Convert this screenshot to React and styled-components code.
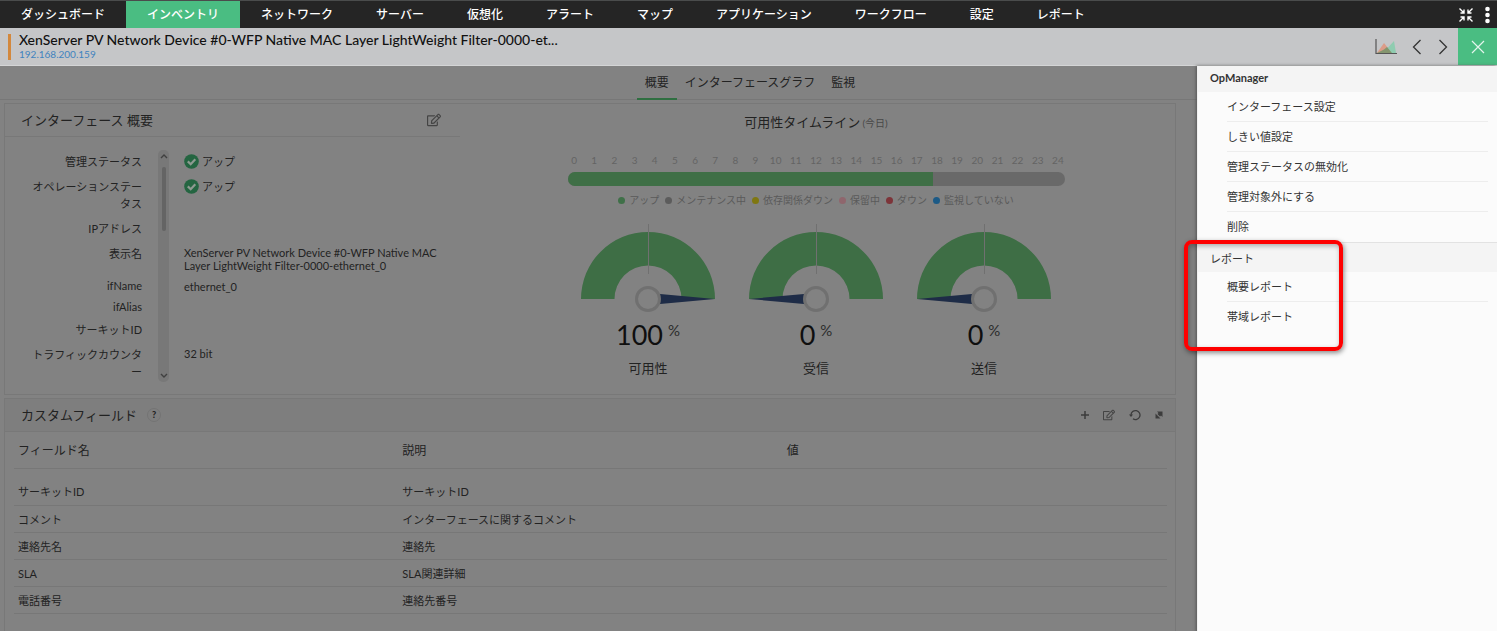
import React from "react";
import styled, { createGlobalStyle } from "styled-components";
import { FaRegEdit } from "react-icons/fa";

const Global = createGlobalStyle`
  *, *::before, *::after { box-sizing: border-box; }
  body {
    margin: 0;
    background: #828282;
    color: #222;
    font-family: Lato, "Noto Sans CJK JP", sans-serif;
    font-size: 11px;
    line-height: 17px;
  }
  h1, h2, h3, p, ul, dl, dd, dt, ol { margin: 0; padding: 0; font-weight: 400; }
  ul, ol { list-style: none; }
  a { color: inherit; text-decoration: none; }
  button {
    border: 0; padding: 0; background: none; color: inherit; font: inherit;
    display: flex; align-items: center; justify-content: center; cursor: pointer;
  }
`;

const Page = styled.div`
  min-height: 100vh;
  display: flex;
  flex-direction: column;
`;

const TopNav = styled.nav`
  display: flex;
  height: 28px;
  background: #252525;
  border-top: 1px solid #4a4c4c;
  color: #fff;
`;

const NavLink = styled.a`
  padding: 0 21px;
  font-size: 12px;
  font-weight: 500;
  line-height: 27px;
  white-space: nowrap;
  background: ${(p) => (p.$active ? "#4abd82" : "transparent")};

  &:nth-child(n + 4) { margin-left: 1px; }
`;

const NavTools = styled.div`
  display: flex;
  align-items: center;
  gap: 10px;
  margin-left: auto;
  padding-right: 6px;
`;

const DeviceBar = styled.header`
  display: flex;
  height: 38px;
  padding-left: 8px;
  background: #c5c6c8;
  border-bottom: 1px solid #d4d5d6;
`;

const DeviceMark = styled.span`
  width: 3px;
  height: 26px;
  margin: 6px 8px 0 0;
  background: #d3883d;
`;

const DeviceTitle = styled.h1`
  padding-top: 3px;
  font-size: 14px;
  font-weight: 500;
  line-height: 17px;
  color: #111;
`;

const DeviceAddress = styled.a`
  display: block;
  font-size: 10px;
  line-height: 13px;
  color: #3f83bf;
`;

const DeviceTools = styled.div`
  display: flex;
  margin-left: auto;
  gap: 9px;
  align-items: center;
`;

const DeviceActions = styled.div`
  display: flex;
  gap: 14px;
`;

const CloseButton = styled.button`
  width: 39px;
  height: 37px;
  background: #4abd82;
`;

const Body = styled.div`
  flex: 1;
  display: flex;
`;

const Main = styled.main`
  flex: 1;
  min-width: 0;
`;

const Tabs = styled.nav`
  display: flex;
  justify-content: center;
  height: 34px;
  padding-left: 303px;
  border-bottom: 1px solid #777;
`;

const Tab = styled.a`
  padding: 0 8px;
  height: 34px;
  font-size: 12px;
  line-height: 34px;
  white-space: nowrap;
  border-bottom: ${(p) => (p.$active ? "2px solid #2f6f41" : "0")};
`;

const Panel = styled.section`
  margin: 3px 21px 0 4px;
  border: 1px solid #787878;
`;

const SummaryPanel = styled(Panel)`
  display: flex;
  height: 292px;
`;

const InfoColumn = styled.div`
  width: 455px;
`;

const PanelHead = styled.div`
  display: flex;
  align-items: center;
  height: 33px;
  padding: 0 ${(p) => p.$right || 19}px 0 16px;
  border-bottom: 1px solid #787878;
  background: ${(p) => (p.$shade ? "#7e7e7e" : "transparent")};
`;

const PanelTitle = styled.h2`
  font-size: 13px;
  line-height: 20px;
`;

const HeadTools = styled.div`
  display: flex;
  gap: 14px;
  align-items: center;
  margin-left: auto;
  color: #444;
`;

const InfoList = styled.div`
  position: relative;
  height: 233px;
  margin-top: 12px;
  overflow: hidden;
`;

const InfoRow = styled.dl`
  display: flex;
  line-height: ${(p) => (p.$latin ? 13 : 17)}px;
`;

const InfoLabel = styled.dt`
  width: 137px;
  padding: 4px 0 4px 26px;
  text-align: right;
  word-break: break-all;
`;

const InfoValue = styled.dd`
  display: flex;
  align-items: flex-start;
  gap: 3px;
  width: 300px;
  padding: 5px 0 3px 42px;
  line-height: 13px;
`;

const StateText = styled.span`
  line-height: 15px;
`;

const ScrollTrack = styled.div`
  position: absolute;
  left: 153px;
  top: 1px;
  width: 11px;
  height: 232px;
  border-radius: 5px;
  background: #787878;
  display: flex;
  flex-direction: column;
  align-items: center;
  padding: 4px 0;
`;

const ScrollThumb = styled.div`
  width: 4px;
  height: 64px;
  margin: 8px 0 auto;
  border-radius: 2px;
  background: #646464;
`;

const StatsColumn = styled.div`
  flex: 1;
  display: flex;
  flex-direction: column;
  align-items: center;
  padding-right: 3px;
`;

const StatsTitle = styled.h2`
  margin-top: 8px;
  font-size: 13px;
  line-height: 20px;

  small { font-size: 10px; color: #484848; margin-left: 2px; }
`;

const Hours = styled.ol`
  display: grid;
  grid-template-columns: repeat(25, 1fr);
  width: 504px;
  margin-top: 19px;
  font-size: 10px;
  line-height: 16px;
  text-align: center;
  color: #646464;
`;

const TimeBar = styled.div`
  width: 497px;
  height: 14px;
  margin-top: 4px;
  border-radius: 7px;
  background: #696969;
  overflow: hidden;
`;

const TimeFill = styled.div`
  height: 100%;
  background: #3f6f46;
`;

const Legend = styled.ul`
  display: flex;
  gap: 6px;
  margin-top: 6px;
  font-size: 10px;
  line-height: 16px;
  color: #5a5a5a;
`;

const LegendItem = styled.li`
  display: flex;
  align-items: center;
  gap: 4px;

  &::before {
    content: "";
    width: 7px;
    height: 7px;
    border-radius: 50%;
    background: ${(p) => p.$color};
  }
`;

const Gauges = styled.div`
  display: flex;
  margin-top: 14px;
`;

const GaugeBox = styled.div`
  display: flex;
  flex-direction: column;
  align-items: center;
  width: 168px;

  svg { display: block; }
`;

const GaugeValue = styled.p`
  display: flex;
  gap: 5px;
  margin-top: 7px;
  font-size: 27px;
  line-height: 32px;
  color: #0f0f0f;

  sup { font-size: 15px; line-height: 22px; color: #2c2c2c; }
`;

const GaugeLabel = styled.p`
  margin-top: 8px;
  font-size: 13px;
  line-height: 18px;
`;

const HelpButton = styled.button`
  width: 14px;
  height: 14px;
  margin-left: 10px;
  border: 1px solid #747474;
  border-radius: 50%;
  font-size: 9px;
  font-weight: 900;
  line-height: 12px;
`;

const FieldTable = styled.table`
  width: calc(100% - 17px);
  margin: 0 8px 17px 9px;
  table-layout: fixed;
  border-collapse: separate;
  border-spacing: 0;

  th, td {
    height: 27px;
    padding: 0 4px;
    text-align: left;
    font-weight: 400;
    border-bottom: 1px solid #777;
    line-height: 17px;
  }
  th { height: 37px; font-size: 12px; }
  tbody tr:first-child td { height: 37px; padding-top: 9px; }
`;

const Side = styled.aside`
  width: 300px;
  background: #fbfbfb;
  border-left: 1px solid #f0f0f0;
  box-shadow: -1px 0 3px #555;
  color: #333;
`;

const SideGroup = styled.section`
  position: relative;
`;

const SideHead = styled.h3`
  height: ${(p) => (p.$divided ? 30 : 26)}px;
  padding: ${(p) => (p.$divided ? 7 : 3)}px 12px 0;
  background: #f4f4f4;
  border-top: ${(p) => (p.$divided ? "1px solid #e2e2e2" : "0")};
  font-size: 11px;
  font-weight: ${(p) => (p.$divided ? 400 : 700)};
`;

const SideItem = styled.li`
  height: 30px;
  margin: 0 9px 0 29px;
  line-height: 30px;
  border-bottom: 1px solid #ededed;

  &:last-child { border-bottom: 0; }
  a { display: block; }
`;

const Callout = styled.div`
  position: absolute;
  left: -14px;
  top: -2px;
  width: 159px;
  height: 111px;
  border: 4px solid #fe0000;
  border-radius: 8px;
  box-shadow: 1px 2px 5px rgba(0, 0, 0, 0.45), inset 1px 2px 5px rgba(0, 0, 0, 0.3);
  pointer-events: none;
`;

const navItems = ["ダッシュボード", "インベントリ", "ネットワーク", "サーバー", "仮想化", "アラート", "マップ", "アプリケーション", "ワークフロー", "設定", "レポート"];

const infoRows = [
  { label: "管理ステータス", value: "アップ", up: true },
  { label: "オペレーションステータス", value: "アップ", up: true },
  { label: "IPアドレス", value: "" },
  { label: "表示名", value: "XenServer PV Network Device #0-WFP Native MAC Layer LightWeight Filter-0000-ethernet_0" },
  { label: "ifName", value: "ethernet_0", latin: true },
  { label: "ifAlias", value: "", latin: true },
  { label: "サーキットID", value: "" },
  { label: "トラフィックカウンター", value: "32 bit" },
];

const legend = [
  ["アップ", "#3f7048"],
  ["メンテナンス中", "#5c5c5c"],
  ["依存関係ダウン", "#7f7711"],
  ["保留中", "#8f666d"],
  ["ダウン", "#7d3439"],
  ["監視していない", "#1c5a86"],
];

const fields = [
  ["サーキットID", "サーキットID"],
  ["コメント", "インターフェースに関するコメント"],
  ["連絡先名", "連絡先"],
  ["SLA", "SLA関連詳細"],
  ["電話番号", "連絡先番号"],
];

const CheckIcon = () => (
  <svg width="15" height="15" viewBox="0 0 15 15" aria-hidden="true">
    <circle cx="7.5" cy="7.5" r="7.3" fill="#246541" />
    <path d="M3.8 7.4 6.7 10.2 11.3 5.3" fill="none" stroke="#8e9a92" strokeWidth="2.2" />
  </svg>
);

const Caret = ({ down }) => (
  <svg width="8" height="5" viewBox="0 0 8 5" aria-hidden="true">
    <path d={down ? "M1 1 4 4 7 1" : "M1 4 4 1 7 4"} fill="none" stroke="#404040" strokeWidth="1.4" />
  </svg>
);

const Gauge = ({ value, label, full }) => (
  <GaugeBox>
    <svg width="168" height="90" viewBox="0 0 168 90" role="img" aria-label={label}>
      <path d="M17 77A67 67 0 0 1 151 77H117.500A33.500 33.500 0 0 0 50.500 77Z" fill="#3e6e45" />
      <path d="M84.500 2V52" stroke="#707070" />
      <path d={full ? "M96 72 151 77 96 82Z" : "M72 72 17 77 72 82Z"} fill="#1e2c47" />
      <circle cx="84" cy="77" r="11.500" fill="#828282" stroke="#707070" strokeWidth="3" />
    </svg>
    <GaugeValue>
      {value}
      <sup>%</sup>
    </GaugeValue>
    <GaugeLabel>{label}</GaugeLabel>
  </GaugeBox>
);

export default function App() {
  return (
    <Page>
      <Global />
      <TopNav>
        {navItems.map((n, i) => (
          <NavLink key={n} href="#" $active={i === 1}>{n}</NavLink>
        ))}
        <NavTools>
          <button aria-label="縮小">
            <svg width="16" height="16" viewBox="0 0 16 16" fill="none" stroke="#fff" strokeWidth="1.400">
              <path d="M1.500 1.500 6 6M2.500 6H6V2.500M14.500 1.500 10 6M13.500 6H10V2.500M1.500 14.500 6 10M2.500 10H6V13.500M14.500 14.500 10 10M13.500 10H10V13.500" />
            </svg>
          </button>
          <button aria-label="メニュー">
            <svg width="7" height="18" viewBox="0 0 7 18" fill="#fff">
              <circle cx="3.500" cy="3" r="2.300" />
              <circle cx="3.500" cy="9" r="2.300" />
              <circle cx="3.500" cy="15" r="2.300" />
            </svg>
          </button>
        </NavTools>
      </TopNav>
      <DeviceBar>
        <DeviceMark />
        <div>
          <DeviceTitle>XenServer PV Network Device #0-WFP Native MAC Layer LightWeight Filter-0000-et...</DeviceTitle>
          <DeviceAddress href="#">192.168.200.159</DeviceAddress>
        </div>
        <DeviceTools>
          <DeviceActions>
            <button aria-label="グラフ">
              <svg width="22" height="16" viewBox="0 0 22 16">
                <path d="M2 14 9 4 17 14Z" fill="#dc9c88" />
                <path d="M8 14 19 2 21 14Z" fill="#8fccb0" />
                <path d="M2 14 9 10.500 12 8 17 14Z" fill="#84956f" />
                <path d="M1 0V14.500H22" fill="none" stroke="#555" strokeWidth="1.200" />
              </svg>
            </button>
            <button aria-label="前へ">
              <svg width="12" height="16" viewBox="0 0 12 16" fill="none" stroke="#333" strokeWidth="1.300">
                <path d="M9.500 1 2.500 8 9.500 15" />
              </svg>
            </button>
            <button aria-label="次へ">
              <svg width="12" height="16" viewBox="0 0 12 16" fill="none" stroke="#333" strokeWidth="1.300">
                <path d="M2.500 1 9.500 8 2.500 15" />
              </svg>
            </button>
          </DeviceActions>
          <CloseButton aria-label="閉じる">
            <svg width="14" height="14" viewBox="0 0 14 14" stroke="#e4f5ec" strokeWidth="1.200">
              <path d="M1 1 13 13M13 1 1 13" />
            </svg>
          </CloseButton>
        </DeviceTools>
      </DeviceBar>
      <Body>
        <Main>
          <Tabs>
            <Tab href="#" $active>概要</Tab>
            <Tab href="#">インターフェースグラフ</Tab>
            <Tab href="#">監視</Tab>
          </Tabs>
          <SummaryPanel>
            <InfoColumn>
              <PanelHead>
                <PanelTitle>インターフェース 概要</PanelTitle>
                <HeadTools>
                  <button aria-label="編集"><FaRegEdit size={14} /></button>
                </HeadTools>
              </PanelHead>
              <InfoList>
                {infoRows.map((r) => (
                  <InfoRow key={r.label} $latin={r.latin}>
                    <InfoLabel>{r.label}</InfoLabel>
                    <InfoValue>
                      {r.up && <CheckIcon />}
                      {r.up ? <StateText>{r.value}</StateText> : r.value}
                    </InfoValue>
                  </InfoRow>
                ))}
                <ScrollTrack>
                  <Caret />
                  <ScrollThumb />
                  <Caret down />
                </ScrollTrack>
              </InfoList>
            </InfoColumn>
            <StatsColumn>
              <StatsTitle>可用性タイムライン<small>(今日)</small></StatsTitle>
              <Hours>
                {Array.from({ length: 25 }, (_, h) => <li key={h}>{h}</li>)}
              </Hours>
              <TimeBar>
                <TimeFill style={{ width: `${(17.65 / 24) * 100}%` }} />
              </TimeBar>
              <Legend>
                {legend.map(([t, c]) => <LegendItem key={t} $color={c}>{t}</LegendItem>)}
              </Legend>
              <Gauges>
                <Gauge value="100" label="可用性" full />
                <Gauge value="0" label="受信" />
                <Gauge value="0" label="送信" />
              </Gauges>
            </StatsColumn>
          </SummaryPanel>
          <Panel>
            <PanelHead $shade $right={12}>
              <PanelTitle>カスタムフィールド</PanelTitle>
              <HelpButton>?</HelpButton>
              <HeadTools>
                <button aria-label="追加">
                  <svg width="8" height="8" viewBox="0 0 8 8" stroke="#3c3c3c" strokeWidth="1.500"><path d="M4 0V8M0 4H8" /></svg>
                </button>
                <button aria-label="編集"><FaRegEdit size={12} /></button>
                <button aria-label="更新">
                  <svg width="12" height="12" viewBox="0 0 12 12" fill="none" stroke="#3c3c3c" strokeWidth="1.300">
                    <path d="M2 6A4.500 4.500 0 1 1 4 9.800" />
                    <path d="M0 5.500H4L2 8Z" fill="#3c3c3c" stroke="none" />
                  </svg>
                </button>
                <button aria-label="展開">
                  <svg width="8" height="8" viewBox="0 0 8 8" fill="#3c3c3c">
                    <path d="M2 0.500H7.500V6L6 4.500 5 5.500 2.500 3 3.500 2ZM5.500 7.500H0.500V2.500Z" />
                  </svg>
                </button>
              </HeadTools>
            </PanelHead>
            <FieldTable>
              <thead>
                <tr><th>フィールド名</th><th>説明</th><th>値</th></tr>
              </thead>
              <tbody>
                {fields.map(([name, desc]) => (
                  <tr key={name}><td>{name}</td><td>{desc}</td><td /></tr>
                ))}
              </tbody>
            </FieldTable>
          </Panel>
        </Main>
        <Side>
          <SideGroup>
            <SideHead>OpManager</SideHead>
            <ul>
              {["インターフェース設定", "しきい値設定", "管理ステータスの無効化", "管理対象外にする", "削除"].map((t) => (
                <SideItem key={t}><a href="#">{t}</a></SideItem>
              ))}
            </ul>
          </SideGroup>
          <SideGroup>
            <SideHead $divided>レポート</SideHead>
            <ul>
              {["概要レポート", "帯域レポート"].map((t) => (
                <SideItem key={t}><a href="#">{t}</a></SideItem>
              ))}
            </ul>
            <Callout />
          </SideGroup>
        </Side>
      </Body>
    </Page>
  );
}
